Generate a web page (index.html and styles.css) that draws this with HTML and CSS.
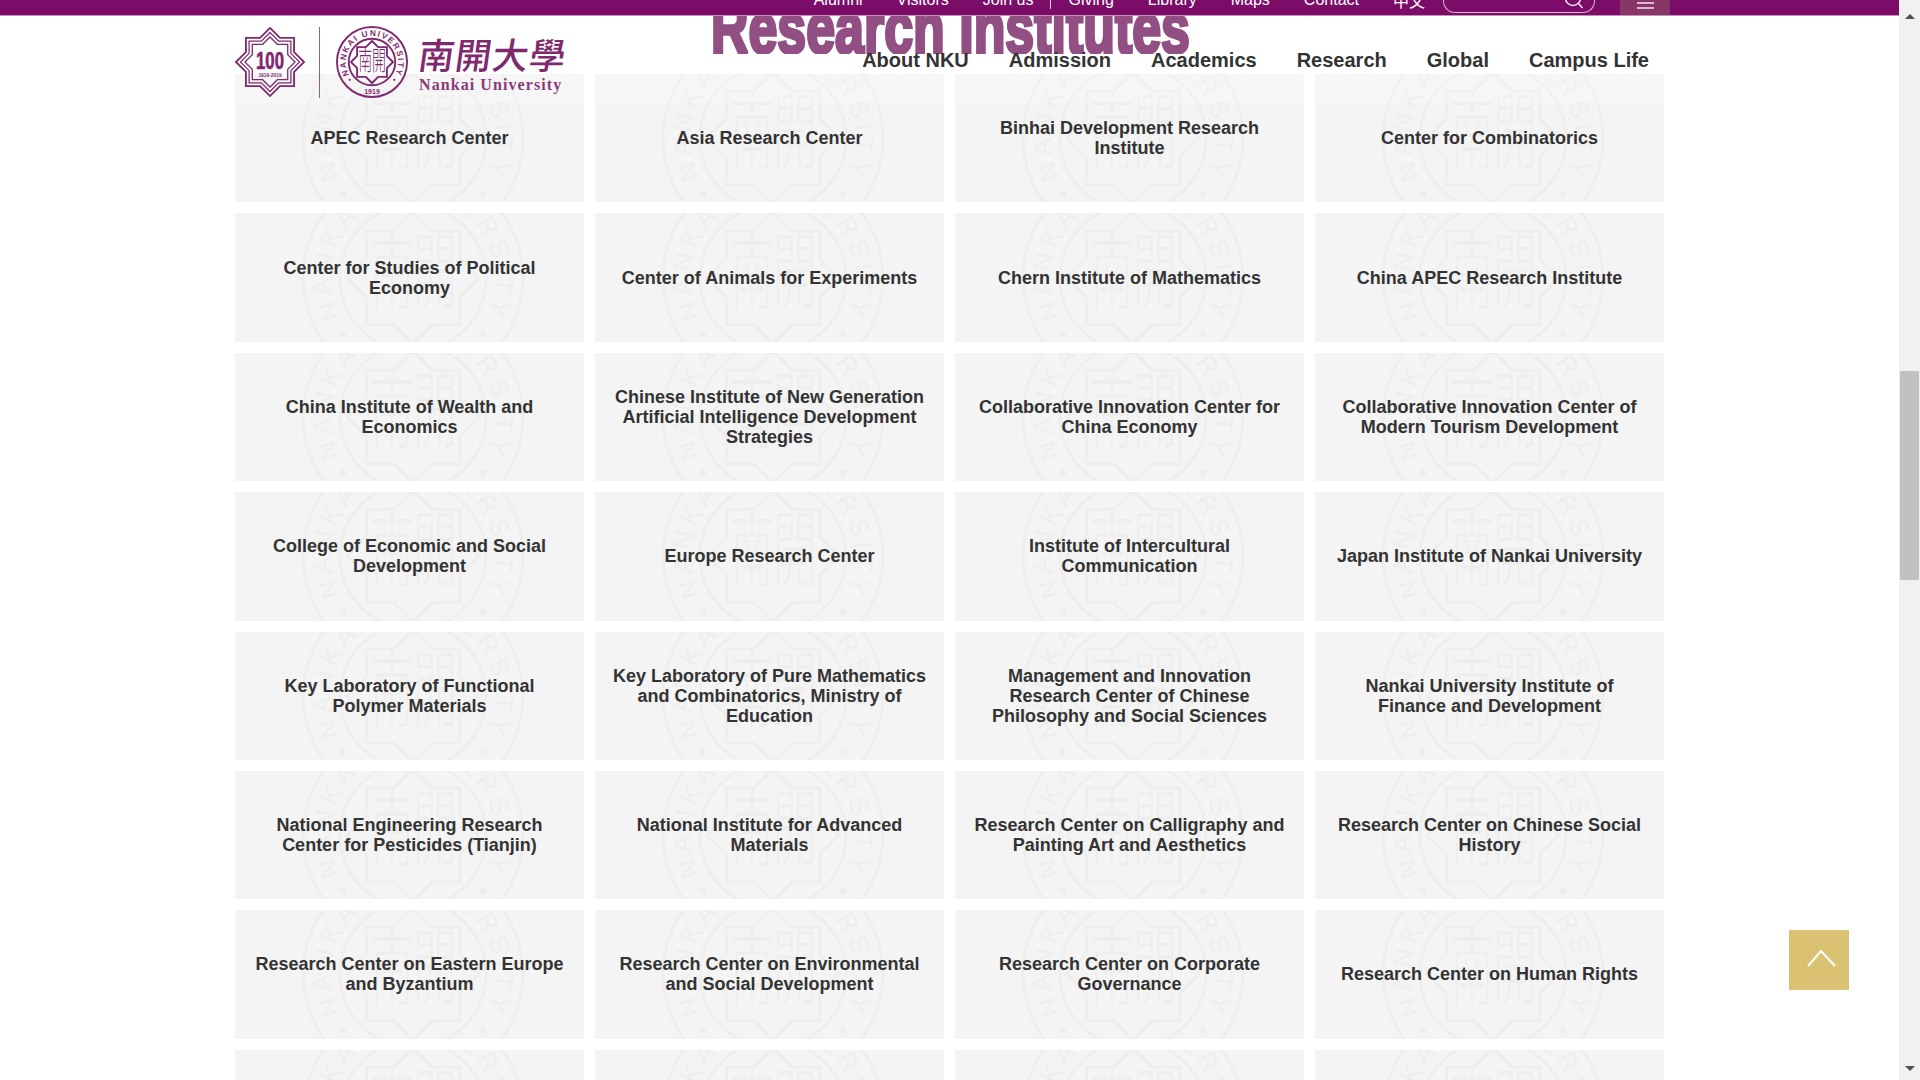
FILE: index.html
```html
<!DOCTYPE html>
<html lang="en">
<head>
<meta charset="utf-8">
<title>Research Institutes - Nankai University</title>
<link rel="stylesheet" href="styles.css">
</head>
<body>
<svg class="defs" aria-hidden="true">
  <defs>
    <path id="oct" d="M0,-66 L19.3,-46.7 46.7,-46.7 46.7,-19.3 66,0 46.7,19.3 46.7,46.7 19.3,46.7 0,66 -19.3,46.7 -46.7,46.7 -46.7,19.3 -66,0 -46.7,-19.3 -46.7,-46.7 -19.3,-46.7 Z"/>
    <path id="ring-top" d="M-63.7,51.6 A82,82 0 1 1 63.7,51.6"/>
    <symbol id="seal" viewBox="-113 -113 226 226">
      <g class="seal-lines" fill="none" stroke="currentColor">
        <circle r="110"/>
        <circle r="73"/>
        <use href="#oct"/>
      </g>
      <g fill="currentColor">
        <text class="seal-ring"><textPath href="#ring-top" startOffset="50%" text-anchor="middle">NANKAI UNIVERSITY</textPath></text>
        <text class="seal-year" x="0" y="100" text-anchor="middle">1919</text>
        <circle cx="-70" cy="56" r="3.5"/>
        <circle cx="70" cy="56" r="3.5"/>
        <text class="seal-han" transform="translate(-21,24) scale(1,1.9)" text-anchor="middle">南</text>
        <text class="seal-han" transform="translate(22,24) scale(1,1.9)" text-anchor="middle">開</text>
      </g>
    </symbol>
  </defs>
</svg>

<div class="page">
  <div class="topbar">
    <a class="toplink">Alumni</a>
    <a class="toplink">Visitors</a>
    <a class="toplink">Join us</a>
    <span class="topdiv"></span>
    <a class="toplink toplink-after">Giving</a>
    <a class="toplink">Library</a>
    <a class="toplink">Maps</a>
    <a class="toplink">Contact</a>
    <a class="toplink toplink-cn">中文</a>
    <div class="search">
      <svg class="search-icon" viewBox="0 0 24 14"><circle cx="8" cy="-2" r="7.5"/><path d="M13.5 3.5 L17.5 8"/></svg>
    </div>
    <div class="menu"><i></i><i></i></div>
  </div>

  <div class="head">
    <h1 class="title-clip">
      <svg class="title" viewBox="0 0 780 38"><text x="151" y="37" textLength="479" lengthAdjust="spacingAndGlyphs">Research Institutes</text></svg>
    </h1>
    <nav class="nav">
      <a>About NKU</a><a>Admission</a><a>Academics</a><a>Research</a><a>Global</a><a>Campus Life</a>
    </nav>
  </div>

  <div class="logo">
    <svg class="logo-star" viewBox="-37 -37 74 74">
      <g fill="none" stroke="#7f2a6e">
        <use href="#oct" transform="scale(.53)" stroke-width="3.6"/>
        <use href="#oct" transform="scale(.46)" stroke-width="2.8"/>
        <use href="#oct" transform="scale(.39)" stroke-width="3.4"/>
      </g>
      <text class="star-num" transform="translate(0,7) scale(.82,1.15)" text-anchor="middle">100</text>
      <text class="star-year" x="0" y="15" text-anchor="middle">1919·2019</text>
    </svg>
    <span class="logo-div"></span>
    <svg class="logo-seal"><use href="#seal"/></svg>
    <div class="logo-text">
      <span class="logo-han">南開大學</span>
      <span class="logo-en">Nankai University</span>
    </div>
  </div>

  <main class="cards">
    <a class="card"><svg class="wm"><use href="#seal"/></svg><span>APEC Research Center</span></a>
    <a class="card"><svg class="wm"><use href="#seal"/></svg><span>Asia Research Center</span></a>
    <a class="card"><svg class="wm"><use href="#seal"/></svg><span>Binhai Development Research Institute</span></a>
    <a class="card"><svg class="wm"><use href="#seal"/></svg><span>Center for Combinatorics</span></a>
    <a class="card"><svg class="wm"><use href="#seal"/></svg><span>Center for Studies of Political Economy</span></a>
    <a class="card"><svg class="wm"><use href="#seal"/></svg><span>Center of Animals for Experiments</span></a>
    <a class="card"><svg class="wm"><use href="#seal"/></svg><span>Chern Institute of Mathematics</span></a>
    <a class="card"><svg class="wm"><use href="#seal"/></svg><span>China APEC Research Institute</span></a>
    <a class="card"><svg class="wm"><use href="#seal"/></svg><span>China Institute of Wealth and Economics</span></a>
    <a class="card"><svg class="wm"><use href="#seal"/></svg><span>Chinese Institute of New Generation Artificial Intelligence Development Strategies</span></a>
    <a class="card"><svg class="wm"><use href="#seal"/></svg><span>Collaborative Innovation Center for China Economy</span></a>
    <a class="card"><svg class="wm"><use href="#seal"/></svg><span>Collaborative Innovation Center of Modern Tourism Development</span></a>
    <a class="card"><svg class="wm"><use href="#seal"/></svg><span>College of Economic and Social Development</span></a>
    <a class="card"><svg class="wm"><use href="#seal"/></svg><span>Europe Research Center</span></a>
    <a class="card"><svg class="wm"><use href="#seal"/></svg><span>Institute of Intercultural Communication</span></a>
    <a class="card"><svg class="wm"><use href="#seal"/></svg><span>Japan Institute of Nankai University</span></a>
    <a class="card"><svg class="wm"><use href="#seal"/></svg><span>Key Laboratory of Functional Polymer Materials</span></a>
    <a class="card"><svg class="wm"><use href="#seal"/></svg><span>Key Laboratory of Pure Mathematics and Combinatorics, Ministry of Education</span></a>
    <a class="card"><svg class="wm"><use href="#seal"/></svg><span>Management and Innovation Research Center of Chinese Philosophy and Social Sciences</span></a>
    <a class="card"><svg class="wm"><use href="#seal"/></svg><span>Nankai University Institute of Finance and Development</span></a>
    <a class="card"><svg class="wm"><use href="#seal"/></svg><span>National Engineering Research Center for Pesticides (Tianjin)</span></a>
    <a class="card"><svg class="wm"><use href="#seal"/></svg><span>National Institute for Advanced Materials</span></a>
    <a class="card"><svg class="wm"><use href="#seal"/></svg><span>Research Center on Calligraphy and Painting Art and Aesthetics</span></a>
    <a class="card"><svg class="wm"><use href="#seal"/></svg><span>Research Center on Chinese Social History</span></a>
    <a class="card"><svg class="wm"><use href="#seal"/></svg><span>Research Center on Eastern Europe and Byzantium</span></a>
    <a class="card"><svg class="wm"><use href="#seal"/></svg><span>Research Center on Environmental and Social Development</span></a>
    <a class="card"><svg class="wm"><use href="#seal"/></svg><span>Research Center on Corporate Governance</span></a>
    <a class="card"><svg class="wm"><use href="#seal"/></svg><span>Research Center on Human Rights</span></a>
    <a class="card"><svg class="wm"><use href="#seal"/></svg></a>
    <a class="card"><svg class="wm"><use href="#seal"/></svg></a>
    <a class="card"><svg class="wm"><use href="#seal"/></svg></a>
    <a class="card"><svg class="wm"><use href="#seal"/></svg></a>
  </main>

  <a class="totop"><svg viewBox="0 0 60 60"><path d="M19 36 L32 21 L46 36"/></svg></a>
</div>

<div class="scrollbar">
  <span class="arrow-up"></span>
  <span class="thumb"></span>
  <span class="arrow-down"></span>
</div>
</body>
</html>
```
FILE: styles.css
```css
* { box-sizing: border-box; }
html, body { margin: 0; height: 100%; overflow: hidden; }
body {
  display: flex;
  font-family: "Liberation Sans", Arial, sans-serif;
  background: #fff;
  color: #333;
}
.defs { position: absolute; width: 0; height: 0; }

.page {
  position: relative;
  width: 1899px;
  height: 1080px;
  overflow: hidden;
  flex: none;
}

/* top bar */
.topbar {
  height: 16px;
  background: #7b0c68;
  border-bottom: 1px solid #c98fbc;
  display: flex;
  justify-content: flex-end;
  align-items: flex-start;
  padding-right: 229px;
  overflow: hidden;
}
.toplink {
  color: #fff;
  font-size: 16px;
  line-height: 18px;
  margin-top: -9px;
  margin-left: 34px;
  white-space: nowrap;
}
.toplink-after { margin-left: 17px; }
.toplink-cn { font-family: "Noto Sans CJK SC", sans-serif; }
.topdiv {
  width: 1px;
  height: 9px;
  margin-left: 17px;
  background: #e6cfe1;
}
.search {
  position: relative;
  width: 152px;
  height: 13px;
  margin-left: 18px;
  border: 1px solid #d9b6d2;
  border-top: 0;
  border-radius: 0 0 12px 12px;
}
.search-icon {
  position: absolute;
  left: 121px;
  top: 0;
  width: 24px;
  height: 14px;
  fill: none;
  stroke: #efe0ec;
  stroke-width: 1.6;
}
.menu {
  width: 50px;
  height: 15px;
  margin-left: 25px;
  background: #883568;
  display: flex;
  flex-direction: column;
  align-items: center;
  padding-top: 2px;
  gap: 3px;
}
.menu i {
  display: block;
  width: 17px;
  height: 2px;
  background: #d9b7d0;
}

/* header */
.head {
  position: relative;
  height: 58px;
  display: flex;
  justify-content: flex-end;
  align-items: flex-end;
  padding-right: 250px;
  padding-bottom: 2px;
}
.title-clip {
  position: absolute;
  left: 560px;
  top: 0;
  width: 780px;
  height: 38px;
  margin: 0;
  overflow: hidden;
}
.title {
  display: block;
  width: 780px;
  height: 38px;
  font-family: "Liberation Sans", Arial, sans-serif;
  font-weight: 700;
  font-size: 72px;
  fill: #924f83;
  stroke: #924f83;
  stroke-width: 3.5px;
  stroke-linejoin: miter;
  stroke-miterlimit: 2;
}
.nav {
  position: relative;
  display: flex;
  gap: 40px;
  font-size: 20px;
  font-weight: 700;
  line-height: 24px;
  color: #333;
  white-space: nowrap;
}

/* logo */
.logo {
  position: absolute;
  left: 234px;
  top: 26px;
  display: flex;
  align-items: center;
  z-index: 3;
  color: #7f2a6e;
}
.logo-star { width: 72px; height: 72px; flex: none; }
.star-num { font: 700 21px "Liberation Sans", Arial, sans-serif; fill: #7f2a6e; stroke: #7f2a6e; stroke-width: .6px; }
.star-year { font: 700 5px "Liberation Sans", Arial, sans-serif; fill: #7f2a6e; }
.logo-div { width: 1px; height: 71px; margin-left: 13px; background: #9b5a8d; flex: none; }
.logo-seal {
  width: 72px;
  height: 72px;
  margin-left: 16px;
  flex: none;
  color: #7f2a6e;
  --seal-line: 6px;
  --seal-weight: 700;
}
.logo-text { display: flex; flex-direction: column; margin-left: 11px; }
.logo-han {
  font-family: "Noto Sans CJK TC", "Noto Sans CJK SC", sans-serif;
  font-size: 36px;
  line-height: 46px;
  letter-spacing: 1px;
  font-weight: 500;
  transform: skewX(-8deg);
  white-space: nowrap;
}
.logo-en {
  font-family: "Liberation Serif", "Times New Roman", serif;
  font-weight: 700;
  font-size: 16px;
  line-height: 18px;
  letter-spacing: 1.08px;
  white-space: nowrap;
  color: #8a3a78;
}

/* seal */
.seal-lines { stroke-width: var(--seal-line, 3px); }
.seal-ring { font: var(--seal-weight, 400) 26px "Liberation Sans", Arial, sans-serif; letter-spacing: 4.6px; }
.seal-year { font: var(--seal-weight, 400) 22px "Liberation Sans", Arial, sans-serif; }
.seal-han { font: 300 44px "Noto Sans CJK TC", "Noto Sans CJK SC", sans-serif; }

/* cards */
.cards {
  position: relative;
  display: grid;
  grid-template-columns: repeat(4, 349px);
  grid-auto-rows: 128.36px;
  gap: 11px;
  margin-top: .1px;
  padding-left: 235px;
}
.cards::before {
  content: "";
  position: absolute;
  left: 0;
  right: 0;
  top: 0;
  height: 29px;
  background: rgba(255, 255, 255, .2);
  z-index: 2;
}
.card {
  position: relative;
  overflow: hidden;
  display: flex;
  align-items: center;
  justify-content: center;
  padding: 0 15px;
  background: #f4f4f4;
  text-align: center;
  font-size: 18px;
  font-weight: 700;
  line-height: 20px;
  color: #333;
}
.card span { position: relative; }
.wm {
  position: absolute;
  left: 50%;
  top: 50%;
  width: 226px;
  height: 226px;
  margin: -113px 0 0 -110px;
  color: #eeeeee;
}

/* back to top */
.totop {
  position: absolute;
  left: 1789px;
  top: 930px;
  width: 60px;
  height: 60px;
  background: #dbc272;
  z-index: 4;
}
.totop svg { display: block; width: 60px; height: 60px; fill: none; stroke: #fff; stroke-width: 2; }

/* scrollbar */
.scrollbar {
  flex: none;
  width: 21px;
  height: 1080px;
  background: #f1f1f1;
  display: flex;
  flex-direction: column;
  align-items: center;
  padding: 14px 0 9px;
}
.arrow-up, .arrow-down { width: 0; height: 0; border-left: 5px solid transparent; border-right: 5px solid transparent; flex: none; }
.arrow-up { border-bottom: 5px solid #505050; }
.arrow-down { border-top: 5px solid #505050; margin-top: auto; }
.thumb { width: 19px; height: 209px; margin-top: 352px; background: #c1c1c1; flex: none; }
```
